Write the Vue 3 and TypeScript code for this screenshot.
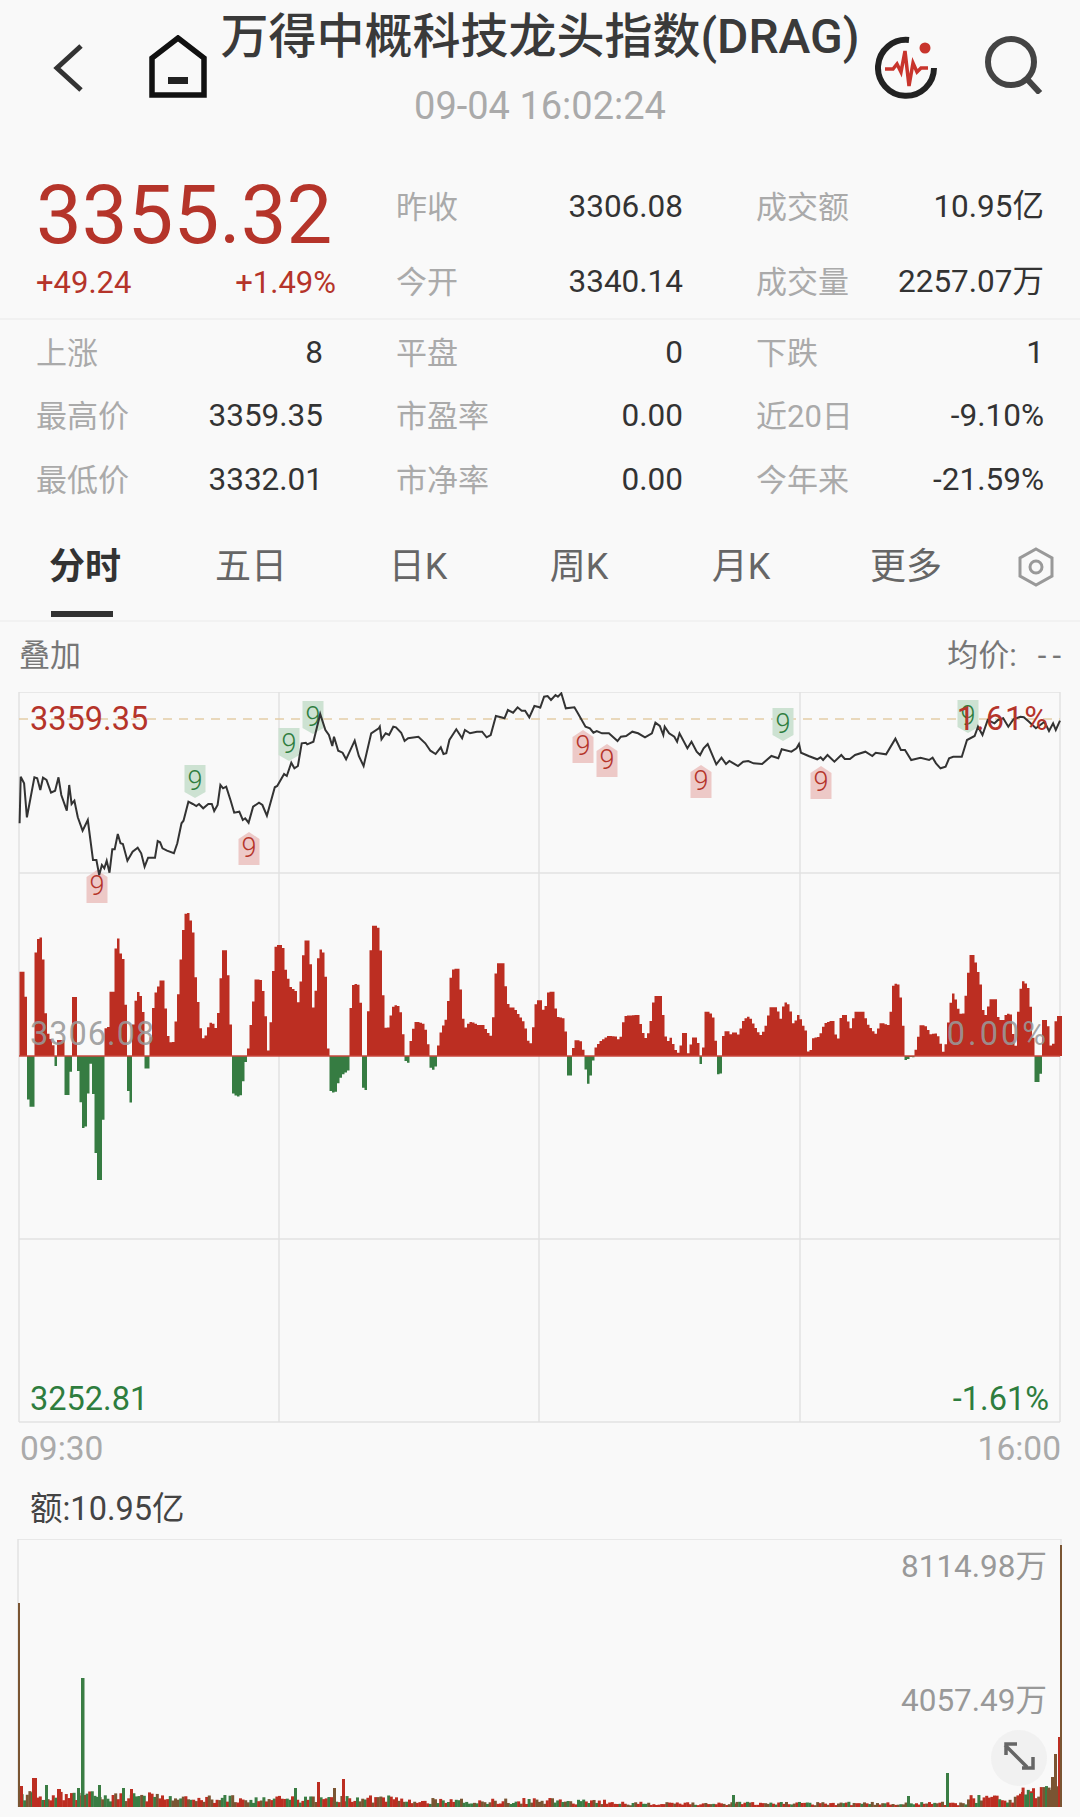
<template>
  <div class="page">
    <!-- Top bar -->
    <header class="nav">
      <div class="nav-side nav-left">
        <svg class="icon-back" width="31" height="50" viewBox="0 0 31 50">
          <path d="M28 3 4 25l24 22" fill="none" stroke="#333" stroke-width="5" />
        </svg>
        <svg class="icon-home" width="60" height="63" viewBox="0 0 60 63">
          <path d="M4 60V23L30 3l26 20v37z" fill="none" stroke="#111" stroke-width="5.5" />
          <rect x="20" y="42" width="20" height="7" fill="#222" />
        </svg>
      </div>
      <div class="nav-title">
        <div class="title">万得中概科技龙头指数(DRAG)</div>
        <div class="time">09-04 16:02:24</div>
      </div>
      <div class="nav-side nav-right">
        <svg width="62" height="63" viewBox="0 0 62 63">
          <path d="M34 4A28 28 0 1 0 59 32" fill="none" stroke="#222" stroke-width="6" />
          <circle cx="50" cy="12" r="5.5" fill="#c8342c" />
          <path d="M10 33h8l4-5 4 8 4-21 4 35 4-23 4 9 4-4h7" fill="none" stroke="#c8342c" stroke-width="3.5" />
        </svg>
        <svg width="58" height="58" viewBox="0 0 58 58">
          <circle cx="26" cy="26" r="23" fill="none" stroke="#444" stroke-width="6" />
          <path d="m42 43 13 14" stroke="#444" stroke-width="6" />
        </svg>
      </div>
    </header>

    <!-- Quote -->
    <section class="quote">
      <div class="price-box">
        <div class="price">3355.32</div>
        <div class="change"><span>+49.24</span><span>+1.49%</span></div>
      </div>
      <div class="quote-grid">
        <template v-for="s in quoteStats" :key="s[0]">
          <div class="stat"><span class="stat-label">{{ s[0] }}</span><span class="stat-value">{{ s[1] }}</span></div>
        </template>
      </div>
    </section>

    <section class="stats">
      <div v-for="s in moreStats" :key="s[0]" class="stat">
        <span class="stat-label">{{ s[0] }}</span><span class="stat-value">{{ s[1] }}</span>
      </div>
    </section>

    <!-- Period tabs -->
    <nav class="tabs">
      <div v-for="(t, i) in tabs" :key="t" class="tab" :class="{ active: i === 0 }">{{ t }}</div>
      <svg class="icon-settings" width="36" height="40" viewBox="0 0 36 40">
        <path d="M18 2 34 11v18l-16 9-16-9V11z" fill="none" stroke="#999" stroke-width="3" />
        <circle cx="18" cy="20" r="6" fill="none" stroke="#999" stroke-width="3" />
      </svg>
    </nav>

    <div class="overlay-row"><span>叠加</span><span class="avg">均价:<span class="avg-dash">--</span></span></div>

    <!-- Intraday chart -->
    <svg class="chart" width="1080" height="732" viewBox="0 692 1080 732">
      <path
        d="M19 692H1060M19 873H1060M19 1239H1060M19 1422H1060M19 692V1422M279 692V1422M539 692V1422M800 692V1422M1060 692V1422"
        fill="none" stroke="#e2e2e2" stroke-width="1.5"
      />
      <path d="M19 719H1060" stroke="#e3cda6" stroke-width="1.5" stroke-dasharray="9 7" />
      <path :d="bars.up" fill="#bc2e22" />
      <path :d="bars.down" fill="#367c42" />
      <path d="M19 1056H1060" stroke="#c9473c" stroke-width="1.5" />
      <g v-for="(b, i) in badges" :key="i" :transform="`translate(${b.x} ${b.y})`">
        <path :d="b.up ? 'M-10.5 33V7L0 0l10.5 7V33z' : 'M-10.5 0H10.5V27L0 33l-10.5-6z'" :fill="b.up ? '#edc9c7' : '#cde2d2'" />
        <text class="badge-text" y="25" text-anchor="middle" :fill="b.up ? '#b5342a' : '#2e7d3e'">9</text>
      </g>
      <polyline :points="linePoints" fill="none" stroke="#333" stroke-width="2" />
      <text class="axis red" x="30" y="730">3359.35</text>
      <text class="axis red wide" x="1049" y="730" text-anchor="end">1.61%</text>
      <text class="axis grey wide" x="30" y="1045">3306.08</text>
      <text class="axis grey wider" x="1049" y="1045" text-anchor="end">0.00%</text>
      <text class="axis green" x="30" y="1410">3252.81</text>
      <text class="axis green" x="1049" y="1410" text-anchor="end">-1.61%</text>
    </svg>

    <div class="time-row"><span>09:30</span><span>16:00</span></div>
    <div class="amount-row">额:10.95亿</div>

    <!-- Volume chart -->
    <svg class="chart" width="1080" height="271" viewBox="0 1539 1080 271">
      <path d="M18 1807V1539H1061V1807" fill="none" stroke="#e2e2e2" stroke-width="1.5" />
      <rect
        v-for="(v, i) in volumeBars" :key="i"
        :x="v.x" :y="v.y" :width="v.w" :height="1807 - v.y" :fill="v.c"
      />
      <text class="axis vol" x="1047" y="1577" text-anchor="end">8114.98万</text>
      <text class="axis vol" x="1047" y="1711" text-anchor="end">4057.49万</text>
      <circle cx="1019" cy="1758" r="28" fill="#efefef" fill-opacity="0.9" />
      <path
        d="M1005 1745l22 22M1006 1755v-11h11M1033 1757v11h-11"
        fill="none" stroke="#666" stroke-width="3.5"
      />
    </svg>
  </div>
</template>

<script setup lang="ts">
const quoteStats = [
  ['昨收', '3306.08'],
  ['成交额', '10.95亿'],
  ['今开', '3340.14'],
  ['成交量', '2257.07万'],
]

const moreStats = [
  ['上涨', '8'],
  ['平盘', '0'],
  ['下跌', '1'],
  ['最高价', '3359.35'],
  ['市盈率', '0.00'],
  ['近20日', '-9.10%'],
  ['最低价', '3332.01'],
  ['市净率', '0.00'],
  ['今年来', '-21.59%'],
]

const tabs = ['分时', '五日', '日K', '周K', '月K', '更多']

// traced from the reference in crop coordinates, x scaled by 2.904 and y by 3
const lineLeft = [
  57,430, 60,290, 70,310, 78,412, 100,292, 108,295, 117,330, 125,293, 135,300, 148,338, 160,332, 170,292, 178,345,
  194,392, 201,315, 208,372, 216,362, 226,412, 240,452, 255,420, 270,540, 280,540, 288,585, 296,555, 303,565,
  310,542, 318,578, 326,508, 333,508, 342,462, 350,490, 357,492, 370,542, 385,515, 400,503, 410,520, 420,560,
  430,533, 450,533, 458,483, 465,487, 472,505, 485,512, 505,520, 515,490, 527,430, 533,422, 547,365, 560,372,
  570,378, 578,372, 590,385, 605,372, 615,372, 622,393, 632,375, 640,315, 648,325, 657,320, 670,362, 680,398,
  695,395, 705,420, 712,415, 722,428, 735,380, 752,368, 762,375, 775,407, 798,322, 805,318, 825,282, 833,288,
  846,248, 855,265, 865,258, 876,190, 888,188, 892,193, 910,185, 930,102, 945,150, 955,165, 965,198, 970,170,
  982,212, 995,218, 1005,238, 1030,182, 1042,228, 1056,258, 1078,160, 1100,145, 1103,140, 1108,178, 1120,160,
  1130,165, 1142,140, 1150,142, 1165,158, 1175,183, 1185,175, 1215,170, 1235,190, 1250,212, 1265,222, 1280,202,
  1288,222, 1296,220, 1305,180, 1325,148, 1342,175, 1350,150, 1365,160, 1385,155, 1400,155, 1413,172, 1425,165,
  1440,108, 1455,112, 1465,115, 1475,90, 1490,98, 1503,82, 1515,92, 1525,92, 1537,112, 1552,78, 1568,82,
]
const lineRight = [
  0,85, 12,50, 22,48, 32,60, 45,45, 52,50, 62,40, 75,85, 100,82, 110,100, 132,140, 145,145, 155,158, 165,153,
  180,160, 200,160, 225,183, 235,170, 250,168, 268,155, 285,160, 305,172, 325,160, 335,128, 348,138, 358,165,
  362,140, 375,160, 390,170, 398,185, 405,160, 428,205, 440,185, 455,215, 465,225, 475,205, 487,192, 512,253,
  527,233, 540,252, 550,243, 575,258, 590,245, 605,243, 620,250, 645,252, 672,228, 692,235, 702,208, 730,215,
  745,205, 752,192, 758,218, 780,228, 805,238, 815,232, 822,240, 835,225, 855,245, 875,225, 885,237, 900,237,
  915,225, 945,215, 965,228, 975,218, 1005,223, 1032,176, 1048,210, 1060,210, 1078,240, 1105,233, 1130,240,
  1140,233, 1150,250, 1163,265, 1178,260, 1188,235, 1200,230, 1225,230, 1240,180, 1262,168, 1272,140, 1285,165,
  1300,120, 1320,130, 1330,120, 1345,115, 1360,140, 1375,118, 1395,110, 1405,112, 1420,125, 1440,145, 1465,125,
  1478,153, 1490,130, 1498,150, 1510,122,
]
const flowLeft = [
  57,385, 60,215, 67,215, 70,268, 75,365, 81,468, 84,590, 90,620, 97,620, 100,440, 104,360, 108,125, 120,110,
  125,285, 130,350, 136,400, 150,430, 157,468, 163,505, 168,468, 172,420, 187,420, 192,468, 195,605, 200,535,
  206,470, 212,430, 216,290, 221,300, 224,468, 235,540, 243,710, 250,620, 255,545, 262,468, 264,445, 268,468,
  272,530, 280,700, 284,840, 290,840, 292,725, 300,600, 306,470, 310,385, 320,380, 325,275, 333,290, 342,98,
  347,160, 358,185, 365,440, 372,535, 380,610, 386,468, 392,345, 403,265, 408,320, 415,345, 420,468, 428,512,
  438,470, 445,350, 455,280, 472,238, 478,330, 486,420, 492,425, 497,460, 503,455, 510,400, 518,330, 528,185,
  535,95, 545,28, 550,60, 558,100, 565,235, 575,335, 582,415, 598,415, 605,395, 612,368, 620,375, 628,400,
  636,360, 645,230, 652,150, 658,200, 665,350, 672,460, 680,580, 692,590, 700,580, 705,515, 712,475, 722,490,
  726,420, 735,350, 745,238, 755,240, 762,280, 770,370, 775,455, 785,450, 790,365, 798,195, 805,135, 818,135,
  825,205, 840,260, 857,275, 865,340, 875,270, 882,180, 893,112, 900,210, 905,320, 915,340, 922,255, 930,145,
  938,165, 945,270, 950,460, 958,468, 962,570, 970,580, 980,545, 990,525, 1010,510, 1015,455, 1020,345, 1030,250,
  1042,258, 1047,385, 1052,550, 1063,572, 1070,450, 1076,220, 1085,75, 1097,85, 1105,190, 1112,345, 1120,412,
  1125,465, 1132,370, 1147,315, 1158,320, 1165,375, 1172,455, 1180,480, 1188,492, 1195,430, 1208,365, 1225,370,
  1235,395, 1243,455, 1250,495, 1258,510, 1265,490, 1272,460, 1285,390, 1300,355, 1315,210, 1330,205, 1340,350,
  1355,405, 1365,365, 1385,375, 1400,375, 1415,400, 1425,430, 1435,370, 1445,190, 1460,190, 1467,285, 1478,340,
  1488,320, 1500,340, 1520,370, 1532,430, 1548,430, 1558,315, 1567,300,
]
const flowRight = [
  0,295, 5,340, 20,320, 28,275, 36,275, 45,350, 65,355, 72,400, 78,460, 85,530, 92,495, 97,460, 105,420, 118,425,
  125,468, 135,490, 140,552, 150,485, 160,450, 178,425, 200,408, 222,410, 228,440, 240,405, 248,348, 282,345,
  295,395, 305,425, 318,400, 325,365, 335,288, 350,288, 358,395, 368,435, 372,460, 378,405, 385,440, 395,458,
  410,460, 418,380, 425,460, 435,460, 447,410, 455,420, 460,468, 465,495, 472,485, 478,440, 485,335, 498,345,
  505,380, 510,500, 520,530, 528,468, 535,410, 542,390, 548,410, 565,397, 580,410, 592,365, 605,350, 618,375,
  635,405, 648,405, 660,375, 672,322, 685,322, 695,360, 705,355, 712,305, 722,320, 730,365, 740,390, 750,345,
  757,370, 770,395, 775,460, 790,450, 797,415, 815,410, 830,370, 850,362, 858,425, 870,415, 878,345, 888,345,
  900,410, 918,335, 935,335, 950,375, 965,395, 980,410, 990,368, 1005,375, 1015,375, 1025,320, 1030,250, 1040,255,
  1050,350, 1055,460, 1063,482, 1070,470, 1090,472, 1100,425, 1107,375, 1120,380, 1130,405, 1150,400, 1160,430,
  1165,465, 1180,450, 1190,360, 1200,280, 1208,320, 1220,345, 1235,340, 1245,235, 1255,162, 1265,200, 1275,240,
  1285,345, 1300,345, 1310,298, 1322,298, 1328,360, 1350,360, 1358,340, 1365,345, 1375,445, 1385,440, 1395,300,
  1403,243, 1415,265, 1425,350, 1432,468, 1438,515, 1444,550, 1452,515, 1457,450, 1463,360, 1470,360, 1480,440,
  1492,450, 1497,405, 1503,348, 1512,348,
]

type Pt = [number, number]

const toPoints = (flat: number[], offsetX: number, baseY: number): Pt[] => {
  const out: Pt[] = []
  for (let i = 0; i < flat.length; i += 2) {
    out.push([offsetX + flat[i] / 2.904, baseY + flat[i + 1] / 3])
  }
  return out
}

const linePoints = [...toPoints(lineLeft, 0, 680), ...toPoints(lineRight, 540, 680)]
  .map((p) => `${p[0].toFixed(1)},${p[1].toFixed(1)}`)
  .join(' ')

const ZERO_Y = 1056
const flow = [...toPoints(flowLeft, 0, 900), ...toPoints(flowRight, 540, 900)]

const flowAt = (x: number) => {
  for (let i = 1; i < flow.length; i++) {
    if (x <= flow[i][0]) {
      const [x0, y0] = flow[i - 1]
      const [x1, y1] = flow[i]
      return y0 + ((y1 - y0) * (x - x0)) / Math.max(x1 - x0, 0.01)
    }
  }
  return flow[flow.length - 1][1]
}

// sample the traced outline into 2.5px wide bars, keeping the peak in each bar
const bars = { up: '', down: '' }
for (let x = 19.5; x < 1060; x += 2.5) {
  const samples = [flowAt(x), flowAt(x + 1.25), flowAt(x + 2.5)]
  const peak = samples.reduce((a, b) => (Math.abs(b - ZERO_Y) > Math.abs(a - ZERO_Y) ? b : a))
  const y = peak.toFixed(1)
  const seg = `M${x} ${ZERO_Y}V${y}h2.5V${ZERO_Y}z`
  if (peak < ZERO_Y) bars.up += seg
  else bars.down += seg
}

const badges = [
  { x: 97, y: 870, up: true },
  { x: 249, y: 832, up: true },
  { x: 583, y: 730, up: true },
  { x: 607, y: 744, up: true },
  { x: 701, y: 765, up: true },
  { x: 821, y: 766, up: true },
  { x: 195, y: 765, up: false },
  { x: 289, y: 728, up: false },
  { x: 313, y: 701, up: false },
  { x: 783, y: 708, up: false },
  { x: 968, y: 700, up: false },
]

const RED = '#bc2e22'
const GREEN = '#3a7d44'
const BROWN = '#7a5533'

// small bars are noise, only the tall ones below were read off the reference
const volumeBars: { x: number; y: number; w: number; c: string }[] = []
let seed = 17
const rand = () => {
  seed = (seed * 1103 + 12345) % 65536
  return seed / 65536
}
for (let x = 18; x < 1060; x += 2.6) {
  let base = 5
  if (x < 160) base = 11
  else if (x < 400) base = 8
  else if (x < 560) base = 6
  else if (x > 1015) base = 14
  else if (x > 965) base = 8
  else if (x > 620) base = 3.5
  const r = rand()
  volumeBars.push({
    x,
    y: 1807 - base * (0.5 + rand()),
    w: 3,
    c: r < 0.45 ? RED : r < 0.72 ? GREEN : BROWN,
  })
}
const tall: [number, number, number, string][] = [
  [18, 1603, 2, BROWN], [20, 1786, 3, RED], [32, 1778, 5, RED], [45, 1785, 3, GREEN], [57, 1789, 4, RED],
  [77, 1788, 3, GREEN], [81, 1678, 3.5, GREEN], [98, 1785, 3, GREEN], [122, 1788, 3, GREEN], [130, 1789, 3, RED],
  [294, 1788, 3, GREEN], [317, 1782, 3, RED], [333, 1788, 3, BROWN], [342, 1779, 3, RED], [732, 1795, 3, GREEN],
  [907, 1796, 3, GREEN], [946, 1773, 3, GREEN], [1021, 1792, 3, RED], [1030, 1793, 3, GREEN], [1047, 1790, 4, BROWN],
  [1051, 1777, 3, BROWN], [1054, 1754, 3, BROWN], [1058, 1737, 3, RED], [1060, 1545, 2, BROWN],
]
for (const [x, y, w, c] of tall) volumeBars.push({ x, y, w, c })
</script>

<style scoped>
.page {
  width: 1080px;
  min-height: 1817px;
  background: #f9f9f9;
  font-family: Roboto, "Noto Sans CJK SC", sans-serif;
  color: #333;
  overflow: hidden;
}

.nav {
  display: flex;
  height: 140px;
}

.nav-side {
  width: 220px;
  display: flex;
  align-items: flex-start;
  padding-top: 36px;
  box-sizing: border-box;
}

.nav-left {
  padding-left: 53px;
  gap: 64px;
}

.icon-back {
  margin-top: 7px;
}

.icon-home {
  margin-top: -1px;
}

.nav-right {
  padding-right: 37px;
  justify-content: flex-end;
  gap: 48px;
}

.nav-title {
  flex: 1;
  text-align: center;
}

.title {
  font-size: 48px;
  line-height: 70px;
  padding-top: 2px;
  font-weight: 500;
  color: #3a3a3a;
  white-space: nowrap;
}

.time {
  font-size: 38px;
  line-height: 68px;
  color: #aaa;
}

.quote {
  height: 180px;
  box-sizing: border-box;
  padding: 30px 35px 0 36px;
  display: flex;
  border-bottom: 2px solid #f1f1f1;
}

.price-box {
  width: 360px;
  flex: none;
}

.price {
  font-size: 81.5px;
  line-height: 90px;
  color: #b5342a;
}

.change {
  width: 300px;
  display: flex;
  justify-content: space-between;
  font-size: 31px;
  line-height: 46px;
  color: #b5342a;
}

.quote-grid {
  flex: 1;
  display: grid;
  grid-template-columns: 287px 288px;
  column-gap: 73px;
  grid-auto-rows: 62px;
  row-gap: 13px;
  margin-top: 6px;
}

.stats {
  height: 200px;
  box-sizing: border-box;
  padding: 1px 35px 0 36px;
  display: grid;
  grid-template-columns: 287px 287px 288px;
  column-gap: 73px;
  grid-auto-rows: 63.5px;
}

.stat {
  display: flex;
  justify-content: space-between;
  align-items: center;
  white-space: nowrap;
}

.stat-label {
  font-size: 31px;
  color: #aaa;
  margin-bottom: 5px;
}

.stat-value {
  font-size: 31.5px;
  line-height: 40px;
  color: #333;
}

.tabs {
  height: 102px;
  box-sizing: border-box;
  padding-left: 3px;
  display: grid;
  grid-template-columns: 164px 168px 166px 156px 168px 162px auto;
  border-bottom: 2px solid #f2f2f2;
}

.tab {
  height: 94px;
  line-height: 94px;
  text-align: center;
  font-size: 36px;
  color: #666;
  position: relative;
}

.tab.active {
  font-weight: 700;
  color: #333;
}

.tab.active::after {
  content: "";
  position: absolute;
  left: 48px;
  bottom: -3px;
  width: 62px;
  height: 6px;
  background: #333;
}

.icon-settings {
  margin: 27px 0 0 31px;
}

.overlay-row {
  height: 70px;
  box-sizing: border-box;
  padding: 0 19px 10px 19px;
  display: flex;
  justify-content: space-between;
  align-items: center;
  font-size: 31px;
  color: #777;
}

.avg {
  white-space: nowrap;
}

.avg-dash {
  margin-left: 21px;
  letter-spacing: 6px;
  margin-right: -6px;
}

.chart {
  display: block;
}

.axis {
  font-family: Roboto, "Noto Sans CJK SC", sans-serif;
  font-size: 32.5px;
}

.wide {
  letter-spacing: 1px;
}

.wider {
  letter-spacing: 3px;
}

.red {
  fill: #b5342a;
}

.grey {
  fill: #999;
  fill-opacity: 0.9;
}

.green {
  fill: #2e7d3e;
}

.vol {
  font-size: 31.5px;
  fill: #999;
}

.badge-text {
  font-family: Roboto, sans-serif;
  font-size: 27px;
  font-weight: 300;
}

.time-row {
  height: 48px;
  padding: 0 19px 0 20px;
  display: flex;
  justify-content: space-between;
  align-items: center;
  font-size: 33.5px;
  color: #aaa;
}

.amount-row {
  height: 67px;
  box-sizing: border-box;
  padding: 8px 0 0 30px;
  line-height: 59px;
  font-size: 32.5px;
  color: #444;
}
</style>

<style>
body {
  background: #f9f9f9;
}
</style>
